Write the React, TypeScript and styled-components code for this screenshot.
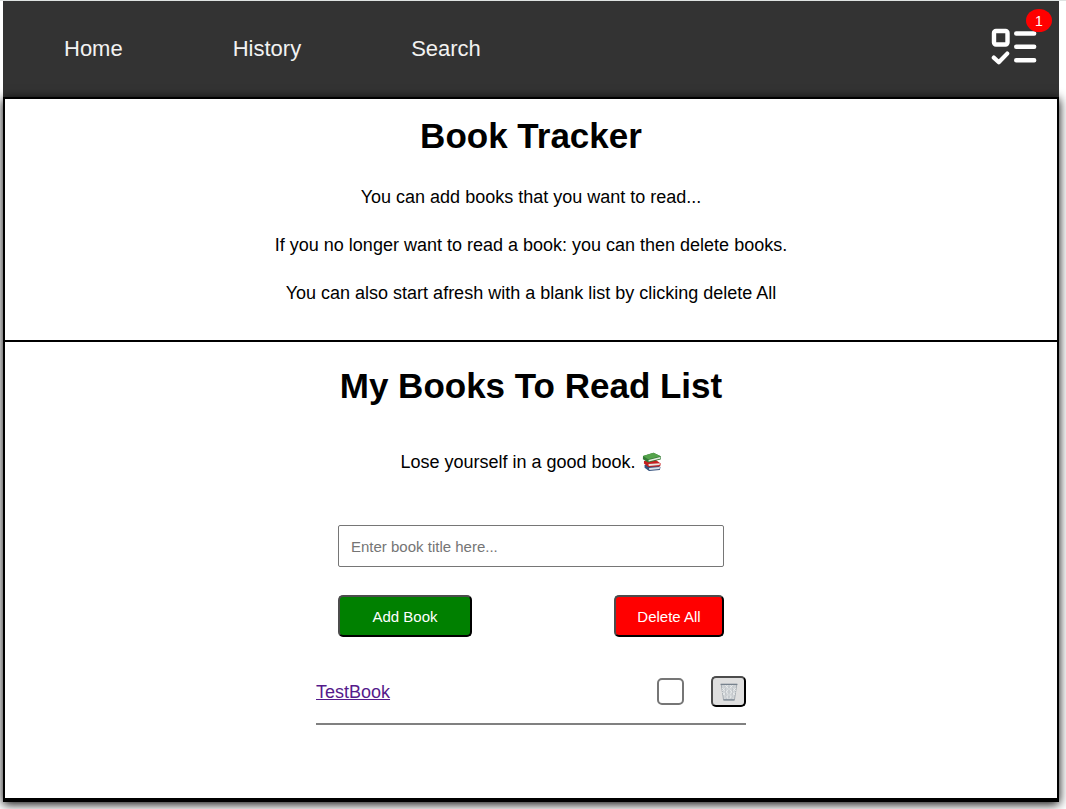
import React, { useState } from "react";
import styled, { createGlobalStyle } from "styled-components";

const GlobalStyle = createGlobalStyle`
  *, *::before, *::after { box-sizing: border-box; }
  body {
    margin: 0;
    background: #fff;
    color: #000;
    font-family: "Liberation Sans", Arial, sans-serif;
    font-size: 18px;
    line-height: 20px;
  }
`;

const Page = styled.div`
  border-top: 1px solid #dfe3e2;
  padding: 0 7px 7px 3px;
`;

const Nav = styled.nav`
  display: flex;
  align-items: center;
  justify-content: space-between;
  height: 96px;
  padding: 0 22px 0 61px;
  background: #333;
`;

const NavLinks = styled.div`
  display: flex;
  gap: 110px;
`;

const NavLink = styled.a`
  color: #f2f2f2;
  font-size: 22px;
  line-height: 26px;
  text-decoration: none;
`;

const ListLink = styled.a`
  position: relative;
  display: block;
  width: 46px;
  height: 42px;
  svg { display: block; }
`;

const Badge = styled.span`
  position: absolute;
  top: -19px;
  right: -15px;
  width: 26px;
  height: 23px;
  border-radius: 50%;
  background: red;
  color: #fff;
  font-size: 14px;
  line-height: 24px;
  text-align: center;
`;

const Card = styled.main`
  position: relative;
  border: 2px solid #000;
  border-bottom-width: 4px;
  background: #fff;
  box-shadow: 0 2px 10px #000;
`;

const Intro = styled.header`
  padding: 16px 16px 37px;
  border-bottom: 2px solid #000;
  text-align: center;
`;

const Title = styled.h1`
  margin: 0 0 30px;
  font-size: 35px;
  line-height: 42px;
`;

const Text = styled.p`
  margin: 0;
  & + & { margin-top: 28px; }
`;

const Section = styled.section`
  display: flex;
  flex-direction: column;
  align-items: center;
  padding: 23px 16px 73px;
`;

const Quote = styled.p`
  display: flex;
  align-items: center;
  gap: 6px;
  margin: 15px 0 53px;
`;

const Form = styled.form`
  width: 100%;
  max-width: 386px;
`;

const TitleInput = styled.input`
  display: block;
  width: 100%;
  height: 42px;
  padding: 0 12px;
  border: 1px solid #767676;
  border-radius: 2px;
  background: #fff;
  font-family: inherit;
  font-size: 15px;
  &::placeholder { color: #757575; opacity: 1; }
`;

const Actions = styled.div`
  display: flex;
  justify-content: space-between;
  margin-top: 28px;
`;

const Button = styled.button<{ $color: string; $width: number }>`
  width: ${(p) => p.$width}px;
  height: 42px;
  padding: 0;
  border: 2px solid;
  border-color: #4c4c4c #000 #000 #4c4c4c;
  border-radius: 5px;
  background: ${(p) => p.$color};
  color: #fff;
  font-family: inherit;
  font-size: 15px;
`;

const Books = styled.ul`
  width: 100%;
  max-width: 430px;
  margin: 39px 0 0;
  padding: 0;
  list-style: none;
`;

const BookRow = styled.li`
  display: flex;
  align-items: center;
  height: 49px;
  padding-bottom: 16px;
  border-bottom: 2px solid #808080;
`;

const BookLink = styled.a`
  margin-right: auto;
  color: #551a8b;
  text-decoration: underline;
`;

const ReadBox = styled.input`
  appearance: none;
  width: 27px;
  height: 27px;
  margin: 0 27px 0 0;
  border: 2px solid #767676;
  border-radius: 5px;
  background: #fff;
  &:checked { background: #767676; }
`;

const TrashButton = styled.button`
  display: flex;
  align-items: center;
  justify-content: center;
  width: 35px;
  height: 31px;
  padding: 0;
  border: 2px solid;
  border-color: #4c4c4c #000 #000 #4c4c4c;
  border-radius: 5px;
  background: #dfdfdf;
`;

const ChecklistIcon = () => (
  <svg width="46" height="38" viewBox="0 0 46 38" fill="none" stroke="#fff" strokeWidth="4.4" strokeLinecap="round" strokeLinejoin="round" aria-hidden="true">
    <rect x="3" y="3" width="13.5" height="13.5" rx="2" />
    <path d="M25.2 5.5H43.2M25.2 18.8H43.2M25.2 32.2H43.2" />
    <path d="M2.8 29.6L7.8 34.2L16.2 25.6" strokeWidth="4.2" />
  </svg>
);

const BooksIcon = () => (
  <svg width="20" height="20" viewBox="0 0 20 20" role="img" aria-label="books">
    <path d="M2.5 13L14 11.8L18.5 15.3L17.8 18L7 19L2.6 15.7Z" fill="#35527e" />
    <path d="M7 16.1L18 15.1L17.5 17L7.4 18Z" fill="#dce3e8" />
    <path d="M2 9L13.5 7.8L18.7 11.4L18.2 14.2L6.3 15.1L1.9 11.5Z" fill="#c52020" />
    <path d="M6.5 12.1L18 11.3L17.5 13.1L6.8 14Z" fill="#e9e5e0" />
    <path d="M1 4L11.5 .8L18.8 4.2L18.7 7.6L6.1 10.5L.9 7.2Z" fill="#347b37" />
    <path d="M1 3.9L11.5 .8L18.6 4.2L6.2 7.2Z" fill="#55a34b" />
    <path d="M6.5 7.9L18.3 5L18 6.7L6.7 9.4Z" fill="#e7ece1" />
  </svg>
);

const TrashIcon = () => (
  <svg width="20" height="20" viewBox="0 0 20 20" fill="none" stroke="#b4b9be" strokeWidth=".7" aria-hidden="true">
    <path d="M2.2 2.4H17.8L15.4 18.2H4.6Z" fill="#d0d4d7" stroke="#9199a1" />
    <path d="M3 6L14.5 17M3 10L10 17.5M6 3L16 13M11 3L17 9M17 6L5.5 17M16.5 10L9.5 17.5M14 3L4 13M9 3L3 9" stroke="#eef0f1" />
    <path d="M6 4L7.2 17.5M10 4V17.5M14 4L12.8 17.5" />
    <path d="M4.6 17.8H15.4" stroke="#7d8994" strokeWidth="1.2" />
    <path d="M1.6 2.4H18.4" stroke="#77828d" strokeWidth="1.3" />
  </svg>
);

export default function App() {
  const [title, setTitle] = useState("");
  const [books, setBooks] = useState<string[]>(["TestBook"]);

  const addBook = (e: React.FormEvent) => {
    e.preventDefault();
    if (title.trim()) setBooks([...books, title.trim()]);
    setTitle("");
  };

  return (
    <>
      <GlobalStyle />
      <Page>
        <Nav>
          <NavLinks>
            <NavLink href="#home">Home</NavLink>
            <NavLink href="#history">History</NavLink>
            <NavLink href="#search">Search</NavLink>
          </NavLinks>
          <ListLink href="#list" aria-label="Reading list">
            <ChecklistIcon />
            <Badge>{books.length}</Badge>
          </ListLink>
        </Nav>
        <Card>
          <Intro>
            <Title>Book Tracker</Title>
            <Text>You can add books that you want to read...</Text>
            <Text>If you no longer want to read a book: you can then delete books.</Text>
            <Text>You can also start afresh with a blank list by clicking delete All</Text>
          </Intro>
          <Section>
            <Title as="h2">My Books To Read List</Title>
            <Quote>
              Lose yourself in a good book.
              <BooksIcon />
            </Quote>
            <Form onSubmit={addBook}>
              <TitleInput
                type="text"
                aria-label="Book title"
                placeholder="Enter book title here..."
                value={title}
                onChange={(e) => setTitle(e.target.value)}
              />
              <Actions>
                <Button type="submit" $color="#008000" $width={134}>Add Book</Button>
                <Button type="button" $color="#ff0000" $width={110} onClick={() => setBooks([])}>Delete All</Button>
              </Actions>
            </Form>
            <Books>
              {books.map((book, i) => (
                <BookRow key={i}>
                  <BookLink href="#book">{book}</BookLink>
                  <ReadBox type="checkbox" aria-label={`Mark ${book} as read`} />
                  <TrashButton
                    type="button"
                    aria-label={`Delete ${book}`}
                    onClick={() => setBooks(books.filter((_, n) => n !== i))}
                  >
                    <TrashIcon />
                  </TrashButton>
                </BookRow>
              ))}
            </Books>
          </Section>
        </Card>
      </Page>
    </>
  );
}
